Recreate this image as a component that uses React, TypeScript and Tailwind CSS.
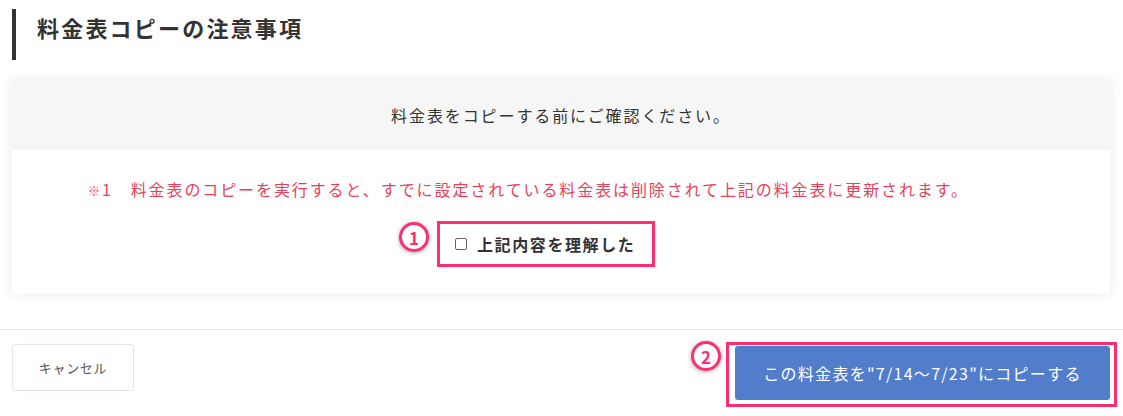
const font = {
  fontFamily: '"Noto Sans CJK JP", "Noto Sans", sans-serif',
};

function Marker({ n }: { n: number }) {
  return (
    <div className="flex h-[30px] w-[30px] items-center justify-center rounded-full border-[3px] border-[#ff2e70] bg-white text-[17px] font-bold leading-none text-[#ff2e70] shadow-[0_1px_4px_rgba(0,0,0,0.35)]">
      {n}
    </div>
  );
}

export default function App() {
  return (
    <div className="min-h-[416px] w-[1123px] bg-white text-[#333]" style={font}>
      {/* 見出し */}
      <div className="px-[12px] pt-[9px]">
        <div className="h-[51px] border-l-[4px] border-[#333] pl-[21px]">
          <h2 className="text-[22px] font-bold leading-[36px] tracking-[0.1em]">
            料金表コピーの注意事項
          </h2>
        </div>
      </div>

      {/* 確認カード */}
      <div className="mx-[12px] mt-[20px] w-[1098px] overflow-hidden rounded-[4px] bg-white shadow-[0_0_14px_rgba(0,0,0,0.09)]">
        <div className="flex h-[70px] items-center justify-center bg-[#f6f6f6] text-[16px] tracking-[1.9px]">
          料金表をコピーする前にご確認ください。
        </div>
        <div className="pb-[27px] pt-[26px]">
          <p className="pl-[76px] text-[16px] leading-[26px] tracking-[1.9px] text-[#e6415c]">
            <span className="text-[12px]">※</span>1
            <span className="ml-[18px]">
              料金表のコピーを実行すると、すでに設定されている料金表は削除されて上記の料金表に更新されます。
            </span>
          </p>
          <div className="mt-[17px] flex items-center pl-[425px]">
            <div className="relative">
              <div className="absolute left-[-38px] top-[1px]">
                <Marker n={1} />
              </div>
              <label className="flex h-[46px] w-[218px] items-center border-[3px] border-[#ff2e70] pl-[15px]">
                <span className="h-[12px] w-[12px] rounded-[2px] border border-[#666] bg-white" />
                <span className="ml-[10px] text-[16px] font-bold tracking-[0.1em]">
                  上記内容を理解した
                </span>
              </label>
            </div>
          </div>
        </div>
      </div>

      {/* フッター */}
      <div className="mt-[35px] border-t border-[#e6e6e6] px-[12px] pt-[14px]">
        <div className="flex items-start justify-between">
          <button className="h-[47px] w-[122px] rounded-[3px] border border-[#dde6e6] bg-white text-[13px] tracking-[0.05em] text-[#555]">
            キャンセル
          </button>
          <div className="relative mr-[1px] mt-[2px]">
            <div className="pointer-events-none absolute bottom-[-7px] left-[-9px] right-[-7px] top-[-4px] border-[3px] border-[#ff2e70]" />
            <div className="absolute left-[-44px] top-[-5px]">
              <Marker n={2} />
            </div>
            <button className="h-[54px] w-[375px] rounded-[3px] bg-[#527dcb] text-[16px] tracking-[0.08em] text-white">
              この料金表を"7/14〜7/23"にコピーする
            </button>
          </div>
        </div>
      </div>
    </div>
  );
}
